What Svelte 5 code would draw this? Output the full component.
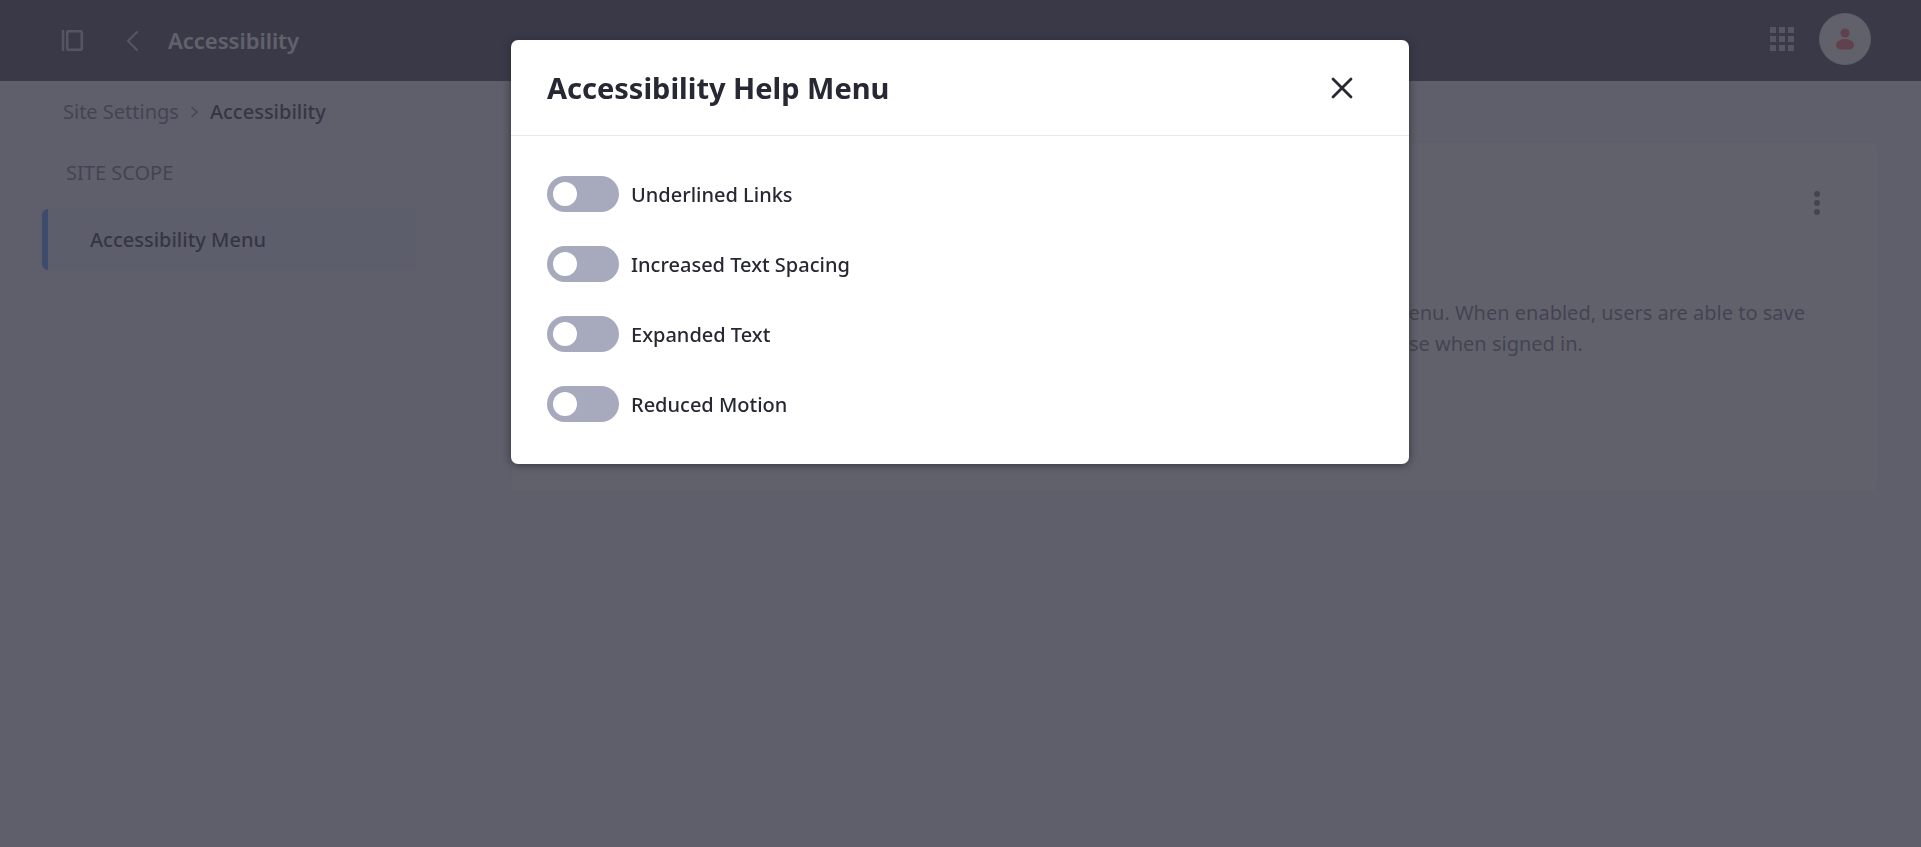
<script>
    let menuOpen = true;

    let options = [
        { id: 'underlined-links', label: 'Underlined Links', checked: false },
        { id: 'text-spacing', label: 'Increased Text Spacing', checked: false },
        { id: 'expanded-text', label: 'Expanded Text', checked: false },
        { id: 'reduced-motion', label: 'Reduced Motion', checked: false }
    ];

    function closeMenu(){
        menuOpen = false;
    }
</script>

<style>
    :global(body){
        margin: 0;
        background: #f3f0f7;
    }
    .page{
        color: #272833;
        font: 20px/31px "Segoe UI", "Noto Sans", "Open Sans", sans-serif;
    }
    button{
        display: flex;
        align-items: center;
        justify-content: center;
        padding: 0;
        border: 0;
        background: none;
        color: inherit;
        cursor: pointer;
    }
    .navbar{
        display: flex;
        align-items: center;
        height: 81px;
        padding: 0 50px 0 60px;
        background: #393a4a;
        color: #c6c7d2;
    }
    .navbar__toggle{
        width: 24px;
    }
    .navbar__back{
        display: flex;
        margin-left: 42px;
    }
    .navbar__title{
        margin: 0 auto 0 30px;
        color: #fff;
        font-size: 22px;
        font-weight: 600;
    }
    .navbar__user{
        display: flex;
        align-items: center;
        gap: 25px;
        padding-bottom: 3px;
    }
    .avatar{
        width: 52px;
        height: 52px;
        border: 1px solid #e7e7ed;
        border-radius: 50%;
        background: #fff;
    }
    .breadcrumb{
        display: flex;
        align-items: center;
        height: 61px;
        padding: 0 63px;
    }
    .breadcrumb a{
        color: #6b6c7e;
        text-decoration: none;
    }
    .breadcrumb svg{
        margin: 0 11px;
    }
    .breadcrumb span{
        font-weight: 500;
    }
    .content{
        display: grid;
        grid-template-columns: 375px 1fr;
        column-gap: 94px;
        padding: 0 43px 0 42px;
    }
    .scope{
        margin: 0;
        padding: 15px 24px 21px;
        color: #6b6c7e;
        font-size: 20px;
        font-weight: 400;
        text-transform: uppercase;
    }
    .menu-link{
        display: block;
        padding: 15px 42px;
        border-left: 6px solid #4b8fff;
        border-radius: 6px;
        background: #e6edf9;
        color: #272833;
        font-weight: 500;
        text-decoration: none;
    }
    .sheet{
        display: flex;
        flex-direction: column;
        align-items: flex-end;
        min-height: 350px;
        box-sizing: border-box;
        padding: 45px 57px;
        border: 1px solid #f0eef3;
        border-radius: 6px;
        background: #fff;
    }
    .sheet__text{
        margin: 78px 15px 0 0;
        color: #6b6c7e;
    }
    .backdrop{
        position: fixed;
        inset: 0;
        display: flex;
        align-items: flex-start;
        justify-content: center;
        padding: 40px 21px 40px 20px;
        background: rgba(58, 57, 71, 0.8);
    }
    .modal{
        width: 898px;
        border-radius: 7px;
        background: #fff;
        box-shadow: 0 1px 8px rgba(39, 40, 51, 0.8);
    }
    .modal__header{
        display: flex;
        align-items: center;
        justify-content: space-between;
        height: 95px;
        padding: 0 43px 0 36px;
        border-bottom: 1px solid #e7e7ed;
    }
    .modal__header h1{
        margin: 0;
        font-size: 29px;
        font-weight: 700;
    }
    .modal__header button{
        width: 48px;
        height: 48px;
    }
    .modal__body{
        display: flex;
        flex-direction: column;
        align-items: flex-start;
        gap: 34px;
        padding: 40px 36px 42px;
    }
    .toggle{
        display: flex;
        align-items: center;
        gap: 12px;
        height: 36px;
        font-weight: 500;
        cursor: pointer;
    }
    .toggle input{
        display: flex;
        align-items: center;
        box-sizing: border-box;
        appearance: none;
        width: 72px;
        height: 36px;
        margin: 0;
        padding: 0 6px;
        border-radius: 18px;
        background: #a7a9bc;
        cursor: pointer;
    }
    .toggle input::before{
        content: '';
        width: 24px;
        height: 24px;
        border-radius: 50%;
        background: #fff;
    }
    .toggle input:checked{
        justify-content: flex-end;
        background: #0b5fff;
    }
</style>

<div class="page">
    <header class="navbar">
        <button class="navbar__toggle" aria-label="Toggle product menu">
            <svg width="24" height="24" viewBox="0 0 24 24" fill="none" stroke="currentColor" stroke-width="2.500">
                <path d="M3 1v21" />
                <rect x="7.200" y="2.200" width="14.600" height="18.600" rx="1" />
            </svg>
        </button>
        <a class="navbar__back" href="#back" aria-label="Back">
            <svg width="12" height="20" viewBox="0 0 12 20" fill="none" stroke="#c6c7d2" stroke-width="2" stroke-linecap="round">
                <path d="M11 1L2 10l9 9" />
            </svg>
        </a>
        <div class="navbar__title">Accessibility</div>
        <div class="navbar__user">
            <button aria-label="Applications menu">
                <svg width="24" height="24" viewBox="0 0 24 24" fill="currentColor">
                    <path d="M0 0h6v6H0zM9 0h6v6H9zM18 0h6v6h-6zM0 9h6v6H0zM9 9h6v6H9zM18 9h6v6h-6zM0 18h6v6H0zM9 18h6v6H9zM18 18h6v6h-6z" />
                </svg>
            </button>
            <button class="avatar" aria-label="User profile">
                <svg width="18" height="22" viewBox="0 0 18 22" fill="#ff5f5f">
                    <circle cx="9" cy="5" r="4.6" />
                    <path d="M9 11c5 0 9 2.600 9 6 0 3-2.500 4.500-5 4.500H5c-2.500 0-5-1.500-5-4.500 0-3.400 4-6 9-6z" />
                </svg>
            </button>
        </div>
    </header>

    <nav class="breadcrumb" aria-label="Breadcrumb">
        <a href="#site-settings">Site Settings</a>
        <svg width="9" height="12" viewBox="0 0 9 12" fill="none" stroke="#6b6c7e" stroke-width="1.500">
            <path d="M1.500 1L7 6l-5.500 5" />
        </svg>
        <span>Accessibility</span>
    </nav>

    <div class="content">
        <aside>
            <h2 class="scope">Site Scope</h2>
            <a class="menu-link" href="#accessibility-menu">Accessibility Menu</a>
        </aside>
        <main class="sheet">
            <button aria-label="Options">
                <svg width="6" height="31" viewBox="0 0 6 31" fill="#6b6c7e">
                    <circle cx="3" cy="6" r="3" />
                    <circle cx="3" cy="15" r="3" />
                    <circle cx="3" cy="24" r="3" />
                </svg>
            </button>
            <p class="sheet__text">
                help menu. When enabled, users are able to save<br>
                database when signed in.
            </p>
        </main>
    </div>
</div>

{#if menuOpen}
    <div class="backdrop page">
        <div class="modal" role="dialog" aria-modal="true" aria-labelledby="modal-title">
            <div class="modal__header">
                <h1 id="modal-title">Accessibility Help Menu</h1>
                <button aria-label="Close" on:click={closeMenu}>
                    <svg width="22" height="22" viewBox="0 0 22 22" fill="none" stroke="currentColor" stroke-width="2.800" stroke-linecap="round">
                        <path d="M2 2l18 18M20 2L2 20" />
                    </svg>
                </button>
            </div>
            <div class="modal__body">
                {#each options as option}
                    <label class="toggle" for={option.id}>
                        <input type="checkbox" role="switch" id={option.id} bind:checked={option.checked}>
                        {option.label}
                    </label>
                {/each}
            </div>
        </div>
    </div>
{/if}
